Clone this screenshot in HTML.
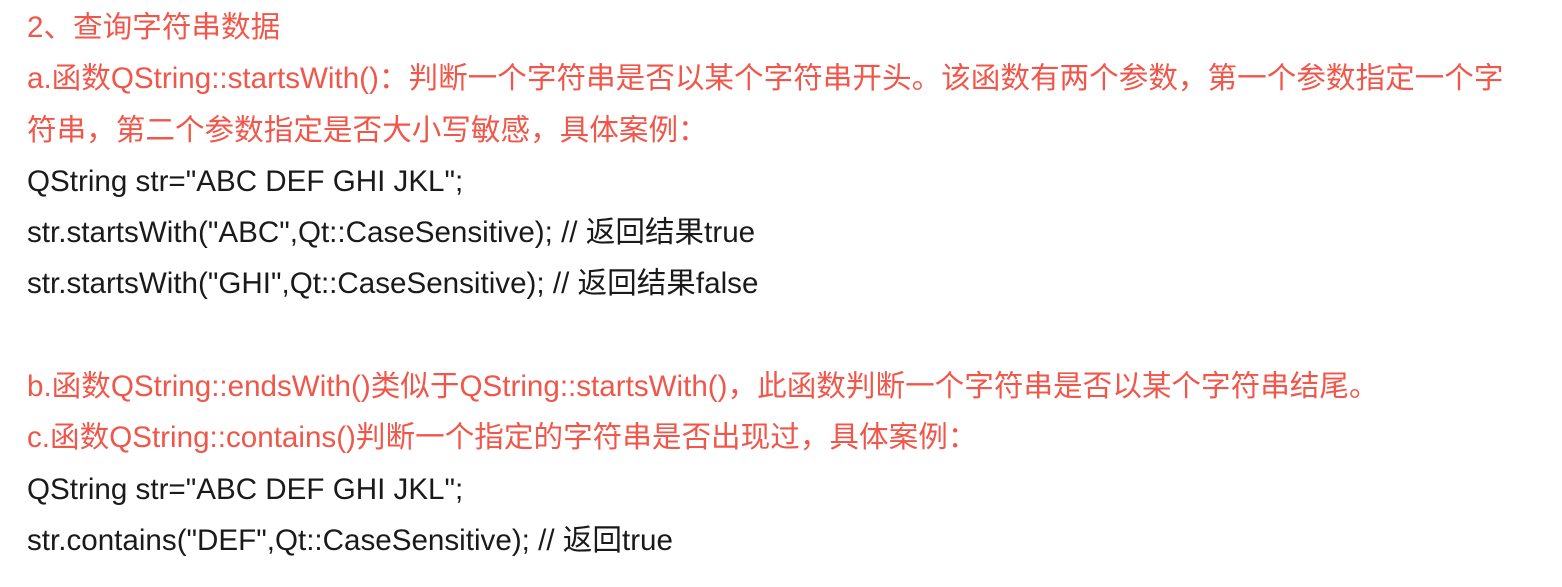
<!DOCTYPE html>
<html><head><meta charset="utf-8"><style>
html,body{margin:0;padding:0;background:#fff;width:1562px;height:587px;overflow:hidden}
body{font-family:"Liberation Sans","Noto Sans CJK SC",sans-serif;font-size:29.6px;line-height:51.3px;color:#1a1a1a;padding:2px 0 0 27px;box-sizing:border-box}
.r{color:#f0574a}
div{white-space:nowrap}
</style></head><body>
<div class="r">2、查询字符串数据</div>
<div class="r">a.函数QString::startsWith()：判断一个字符串是否以某个字符串开头。该函数有两个参数，第一个参数指定一个字</div>
<div class="r">符串，第二个参数指定是否大小写敏感，具体案例：</div>
<div>QString str="ABC DEF GHI JKL";</div>
<div>str.startsWith("ABC",Qt::CaseSensitive); // 返回结果true</div>
<div>str.startsWith("GHI",Qt::CaseSensitive); // 返回结果false</div>
<div>&nbsp;</div>
<div class="r">b.函数QString::endsWith()类似于QString::startsWith()，此函数判断一个字符串是否以某个字符串结尾。</div>
<div class="r">c.函数QString::contains()判断一个指定的字符串是否出现过，具体案例：</div>
<div>QString str="ABC DEF GHI JKL";</div>
<div>str.contains("DEF",Qt::CaseSensitive); // 返回true</div>
</body></html>
